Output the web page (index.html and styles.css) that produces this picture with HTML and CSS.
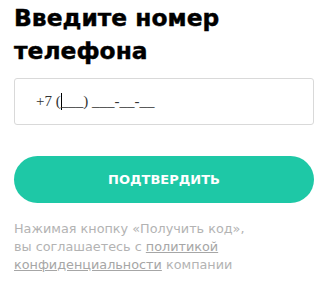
FILE: index.html
```html
<!DOCTYPE html>
<html lang="ru">
<head>
    <meta charset="UTF-8">
    <meta name="viewport" content="width=device-width, initial-scale=1.0">
    <title>Введите номер телефона</title>
    <link rel="stylesheet" href="styles.css">
</head>
<body>
    <div class="phone-form">
        <h1>Введите номер телефона</h1>
        <div class="phone-input">+7 (<span class="caret"></span>___) ___-__-__</div>
        <button type="button" class="confirm-btn">Подтвердить</button>
        <p class="note">
            Нажимая кнопку «Получить код»,<br>
            вы соглашаетесь с <a href="#">политикой</a><br>
            <a href="#">конфиденциальности</a> компании
        </p>
    </div>
</body>
</html>
```

FILE: styles.css
```css
* {
    margin: 0;
    padding: 0;
    box-sizing: border-box;
}

body {
    font-family: "DejaVu Sans", sans-serif;
    background: #fff;
}

.phone-form {
    width: 300px;
    margin-left: 14px;
    padding-top: 2px;
}

h1 {
    font-size: 23.4px;
    font-weight: bold;
    line-height: 33px;
    color: #000;
    width: 260px;
    margin-bottom: 10px;
    -webkit-text-stroke: 0.4px #000;
}

.phone-input {
    height: 47px;
    border: 1px solid #d9d9d9;
    border-radius: 3px;
    padding: 0 21px;
    display: flex;
    align-items: center;
    font-family: "Liberation Serif", serif;
    font-size: 15px;
    color: #333;
    margin-bottom: 31px;
}

.caret {
    display: inline-block;
    width: 1px;
    height: 17px;
    background: #000;
    margin-right: -1px;
}

.confirm-btn {
    display: block;
    width: 100%;
    height: 47px;
    border: none;
    border-radius: 24px;
    background-color: #1ec8a6;
    color: #fff;
    font-family: "DejaVu Sans", sans-serif;
    font-size: 13px;
    font-weight: bold;
    cursor: pointer;
    text-transform: uppercase;
    margin-bottom: 17px;
}

.note {
    font-size: 12.8px;
    line-height: 18px;
    color: #b3b3b3;
}

.note a {
    color: #a6a6a6;
    text-decoration: underline;
}
```
